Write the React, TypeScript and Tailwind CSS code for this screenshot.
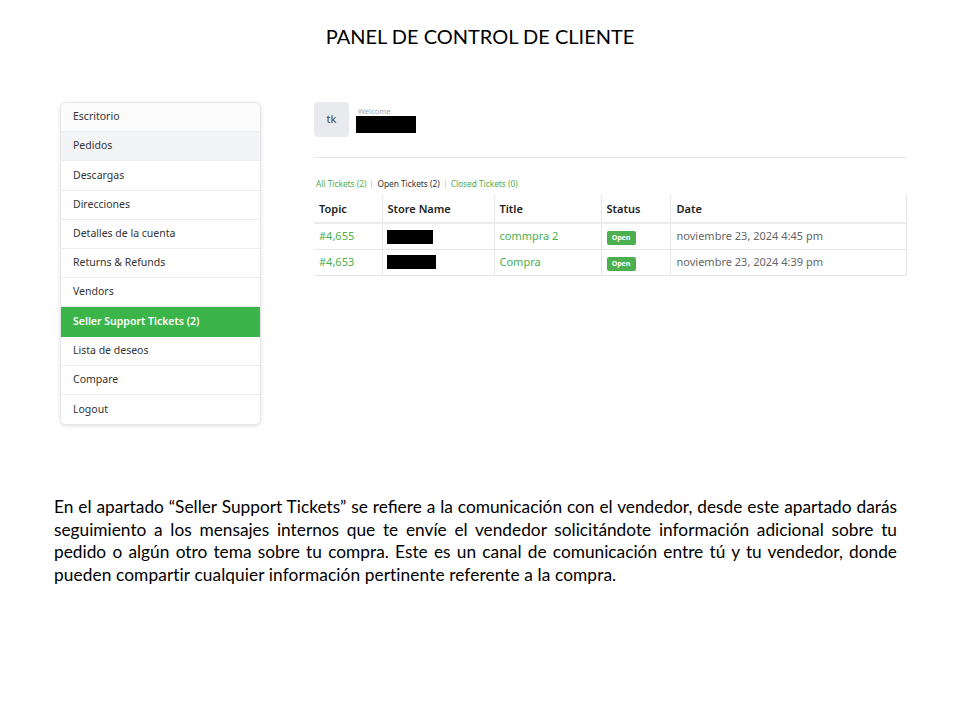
import React from "react";

const menu = [
  "Escritorio",
  "Pedidos",
  "Descargas",
  "Direcciones",
  "Detalles de la cuenta",
  "Returns & Refunds",
  "Vendors",
  "Seller Support Tickets (2)",
  "Lista de deseos",
  "Compare",
  "Logout",
];

const rows = [
  { topic: "#4,655", box: "w-[46px]", title: "commpra 2", date: "noviembre 23, 2024 4:45 pm" },
  { topic: "#4,653", box: "w-[49px]", title: "Compra", date: "noviembre 23, 2024 4:39 pm" },
];

const lines = [
  "En el apartado “Seller Support Tickets” se refiere a la comunicación con el vendedor, desde este apartado darás",
  "seguimiento a los mensajes internos que te envíe el vendedor solicitándote información adicional sobre tu",
  "pedido o algún otro tema sobre tu compra. Este es un canal de comunicación entre tú y tu vendedor, donde",
];

export default function App() {
  return (
    <div className="w-[960px] h-[720px] bg-white overflow-hidden" style={{ fontFamily: "'Noto Sans', sans-serif" }}>
      <div
        className="pt-[23px] text-center text-[20px] leading-[26px] text-black"
        style={{ fontFamily: "Lato, 'Open Sans', sans-serif" }}
      >
        PANEL DE CONTROL DE CLIENTE
      </div>

      <div className="flex mt-[53px]">
        {/* Sidebar */}
        <div className="ml-[60px] w-[201px] rounded-[6px] border border-[#e5e7eb] shadow-[0_1px_4px_rgba(0,0,0,0.12)] overflow-hidden bg-white">
          {menu.map((m, i) => {
            const active = i === 7;
            const bg = active
              ? "bg-[#3bb54a] text-white font-semibold"
              : i === 1
              ? "bg-[#f3f4f6] text-[#333]"
              : i === 0
              ? "bg-[#fbfbfb] text-[#333]"
              : "bg-white text-[#333]";
            return (
              <div
                key={m}
                className={`h-[29.2px] flex items-center pl-[12px] text-[10.5px] ${bg} ${
                  i < menu.length - 1 && !active ? "border-b border-[#ececec]" : ""
                }`}
              >
                {m}
              </div>
            );
          })}
        </div>

        {/* Right content */}
        <div className="ml-[53px] w-[593px]">
          <div className="flex items-start">
            <div className="w-[35px] h-[35px] rounded-[4px] bg-[#e8eaed] flex items-center justify-center text-[11px] text-[#444]">
              tk
            </div>
            <div className="ml-[7px] pt-[5px]">
              <div className="text-[7.5px] leading-[8px] text-[#9ca3af] pl-[2px]">Welcome</div>
              <div className="w-[60px] h-[17px] bg-black mt-[1px]" />
            </div>
          </div>
          <div className="mt-[20px] h-px bg-[#e8e8e8]" />
          <div className="mt-[20px] flex items-center text-[8.3px] pl-[2px]">
            <span className="text-[#4caf50]">All Tickets (2)</span>
            <span className="mx-[5px] h-[9px] w-px bg-[#ddd]" />
            <span className="text-[#333]">Open Tickets (2)</span>
            <span className="mx-[5px] h-[9px] w-px bg-[#ddd]" />
            <span className="text-[#4caf50]">Closed Tickets (0)</span>
          </div>
          <table className="mt-[5px] w-[593px] border-collapse text-[11px]">
            <thead>
              <tr className="h-[28px] text-[#222] font-semibold">
                <td className="w-[68px] pl-[5px] border-r border-[#e5e5e5] border-b-2 border-b-[#ececec]">Topic</td>
                <td className="w-[112px] pl-[5px] border-r border-[#e5e5e5] border-b-2 border-b-[#ececec]">Store Name</td>
                <td className="w-[107px] pl-[5px] border-r border-[#e5e5e5] border-b-2 border-b-[#ececec]">Title</td>
                <td className="w-[69px] pl-[5px] border-r border-[#e5e5e5] border-b-2 border-b-[#ececec]">Status</td>
                <td className="pl-[6px] border-r border-[#e5e5e5] border-b-2 border-b-[#ececec]">Date</td>
              </tr>
            </thead>
            <tbody>
              {rows.map((r) => (
                <tr key={r.topic} className="h-[26px] border-b border-[#e5e5e5]">
                  <td className="pl-[5px] text-[#4caf50] border-r border-[#e5e5e5]">{r.topic}</td>
                  <td className="pl-[4px] border-r border-[#e5e5e5]">
                    <div className={`${r.box} h-[14px] bg-black`} />
                  </td>
                  <td className="pl-[5px] text-[#4caf50] border-r border-[#e5e5e5]">{r.title}</td>
                  <td className="pl-[5px] border-r border-[#e5e5e5]">
                    <span className="inline-flex items-center justify-center w-[29px] h-[14px] rounded-[2px] bg-[#4caf50] text-white text-[7px] font-bold">
                      Open
                    </span>
                  </td>
                  <td className="pl-[6px] text-[#666] border-r border-[#e5e5e5]">{r.date}</td>
                </tr>
              ))}
            </tbody>
          </table>
        </div>
      </div>

      <div
        className="mt-[71px] ml-[54px] w-[843px] text-[17.3px] leading-[22.6px] text-black"
        style={{ fontFamily: "Lato, 'Open Sans', sans-serif" }}
      >
        {lines.map((l) => (
          <div key={l} className="text-justify [text-align-last:justify] whitespace-nowrap">
            {l}
          </div>
        ))}
        <div className="tracking-[0.1px]">pueden compartir cualquier información pertinente referente a la compra.</div>
      </div>
    </div>
  );
}
